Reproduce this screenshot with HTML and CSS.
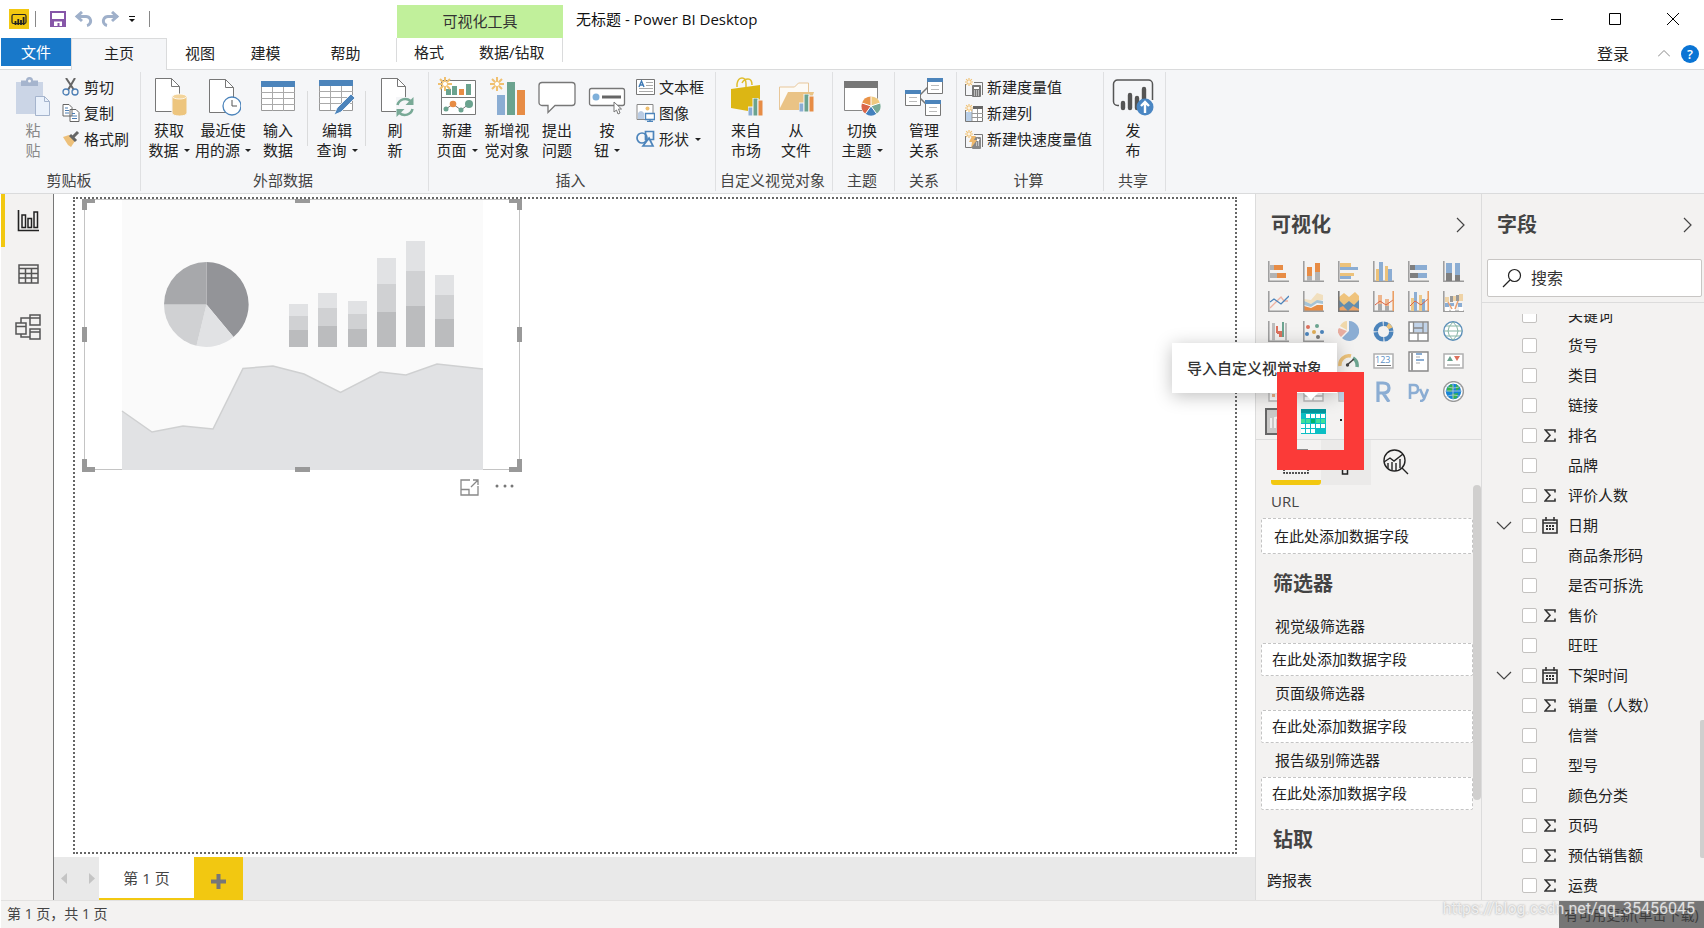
FILE: index.html
```html
<!DOCTYPE html>
<html lang="zh-CN">
<head>
<meta charset="utf-8">
<title>无标题 - Power BI Desktop</title>
<link rel="stylesheet" href="styles.css">
</head>
<body>
<svg class="defs" aria-hidden="true">
  <symbol id="star" viewBox="0 0 14 14"><g stroke="#f0c070" stroke-width="2"><path d="M7 0v4M7 10v4M0 7h4M10 7h4M2 2l3 3M9 9l3 3M12 2l-3 3M5 9l-3 3"/></g><circle cx="7" cy="7" r="2.6" fill="#fff" stroke="#f0c070" stroke-width="1"/></symbol>
  <symbol id="minibars" viewBox="0 0 15 18"><path d="M0 9h5v9H0z" fill="#8badd3" stroke="#f5f6f8"/><path d="M5 0h5v18H5z" fill="#6ba38f" stroke="#f5f6f8"/><path d="M10 2h5v16h-5z" fill="#e78c45" stroke="#f5f6f8"/></symbol>
  <symbol id="axis" viewBox="0 0 21 21"><path d="M.8 0v20.2H21" fill="none" stroke="#9b9b9b" stroke-width="1.5"/></symbol>
  <symbol id="sigma" viewBox="0 0 12 13"><path d="M11 3.5V1H1.2L6 6.3 1 12h10V9.5" fill="none" stroke="#333" stroke-width="1.6"/></symbol>
  <symbol id="calendar" viewBox="0 0 16 17"><path d="M1 3h14v13H1zM1 6h14M4 0v4M12 0v4" fill="none" stroke="#333" stroke-width="1.6"/><path d="M4 8h2v2H4zm3 0h2v2H7zm3 0h2v2h-2zM4 11h2v2H4zm3 0h2v2H7zm3 0h2v2h-2z" fill="#333"/></symbol>
  <symbol id="down" viewBox="0 0 16 9"><path d="M1 1l7 7 7-7" fill="none" stroke="#444" stroke-width="1.2"/></symbol>
  <symbol id="right" viewBox="0 0 9 16"><path d="M1 1l7 7-7 7" fill="none" stroke="#444" stroke-width="1.2"/></symbol>
</svg>

<div class="app">
<header class="top">
  <div class="quick">
    <svg width="20" height="20" viewBox="0 0 20 20"><path fill="#f2c811" d="M0 0h20v20H0z"/><rect x="3" y="5.500" width="14" height="9" rx="1.500" fill="none" stroke="#222" stroke-width="1.200"/><path d="M6.500 12v4M9.300 10v6M12 11v5M14.600 8v8" stroke="#222" stroke-width="1.800"/></svg>
    <span class="bar"></span>
    <button aria-label="保存"><svg width="16" height="16" viewBox="0 0 16 16"><path fill="#8656a8" d="M0 0h16v16H0z"/><path fill="#fff" d="M2 2h12v6H2zM4 10.500h8V15H9.500v-3h-2v3H4z"/></svg></button>
    <button aria-label="撤消"><svg width="19" height="16" viewBox="0 0 19 16"><path d="M2 5.500h9a4.500 4.500 0 0 1 2 9M8 1L3 5.500 8 10" fill="none" stroke="#9fb0ca" stroke-width="3"/></svg></button>
    <button aria-label="恢复"><svg width="19" height="16" viewBox="0 0 19 16"><path d="M17 5.500H8a4.500 4.500 0 0 0-2 9M11 1l5 4.500L11 10" fill="none" stroke="#9fb0ca" stroke-width="3"/></svg></button>
    <button aria-label="自定义"><svg width="8" height="8" viewBox="0 0 8 8"><path d="M1 1.500h6" stroke="#111"/><path d="M1 4h6L4 7z" fill="#111"/></svg></button>
    <span class="bar"></span>
  </div>
  <div class="context">可视化工具</div>
  <h1 class="title">无标题 - Power BI Desktop</h1>
  <div class="winbtns">
    <button aria-label="最小化"><svg width="12" height="12"><path d="M0 6.500h12" stroke="#000"/></svg></button>
    <button aria-label="最大化"><svg width="12" height="12"><path d="M.5.5h11v11H.5z" fill="none" stroke="#000"/></svg></button>
    <button aria-label="关闭"><svg width="12" height="12"><path d="M0 0l12 12M12 0L0 12" stroke="#000"/></svg></button>
  </div>
</header>

<nav class="tabs">
  <button class="file">文件</button>
  <button class="home">主页</button>
  <button class="w-view">视图</button>
  <button class="w-model">建模</button>
  <button class="w-help">帮助</button>
  <div class="ctx-tabs"><button>格式</button><button>数据/钻取</button></div>
  <div class="account">
    <button class="login">登录</button>
    <button aria-label="折叠功能区"><svg width="12" height="7" viewBox="0 0 12 7"><path d="M0 6.500l6-6 6 6" fill="none" stroke="#888"/></svg></button>
    <button class="help" aria-label="帮助">?</button>
  </div>
</nav>

<section class="ribbon">
  <div class="group g-clip">
    <div class="tools">
      <button class="big off"><svg width="36" height="40" viewBox="0 0 36 40"><path d="M1 5h27v32H1z" fill="#cbd5e6"/><path d="M6 3.500h5a3.500 3.500 0 0 1 7 0h5V9H6z" fill="#a5b4cd"/><circle cx="14.500" cy="4" r="1.500" fill="#f5f6f8"/><path d="M20.500 19.500h9l5 5v14h-14z" fill="#eaf1fb" stroke="#a5b4cd"/><path d="M29.500 19.500v5h5" fill="none" stroke="#a5b4cd"/></svg><span>粘</span><span>贴</span></button>
      <div class="small">
        <button><svg width="18" height="18" viewBox="0 0 18 18"><path d="M4 0l8 12M13 0L6 12" stroke="#666" stroke-width="2"/><circle cx="4" cy="14" r="3" fill="none" stroke="#4c7eb4" stroke-width="1.300"/><circle cx="13" cy="14" r="3" fill="none" stroke="#4c7eb4" stroke-width="1.300"/></svg>剪切</button>
        <button><svg width="18" height="18" viewBox="0 0 18 18"><path d="M1 .5h6l3 3V12H1zM8 5.500h6l3 3V17.500H8z" fill="#fff" stroke="#666"/><path d="M3 4h3M3 6.500h4M3 9h4M10 9.500h3M10 12h5M10 14.500h5" stroke="#4c7eb4"/></svg>复制</button>
        <button><svg width="18" height="18" viewBox="0 0 18 18"><path d="M1 7l6-2 6 6-4 6-3-2z" fill="#edc07a"/><path d="M8 5l6 6" stroke="#666" stroke-width="3"/><path d="M11 7l5-5" stroke="#666" stroke-width="3"/></svg>格式刷</button>
      </div>
    </div>
    <h2>剪贴板</h2>
  </div>
  <div class="group g-data">
    <div class="tools">
      <button class="big w54"><svg width="36" height="40" viewBox="0 0 36 40"><path d="M4.500 1.500h16l8 8v25h-24z" fill="#fff" stroke="#777"/><path d="M20.500 1.500v8h8" fill="none" stroke="#777"/><path d="M21 19v17c0 4 15 4 15 0V19z" fill="#edc57e" stroke="#f5f6f8"/><ellipse cx="28.500" cy="19.500" rx="7" ry="2.500" fill="#f3d49b" stroke="#fff" stroke-width=".8"/></svg><span>获取</span><span>数据<i class="dd"></i></span></button>
      <button class="big w54"><svg width="36" height="40" viewBox="0 0 36 40"><path d="M4.500 2.500h16l8 8v25h-24z" fill="#fff" stroke="#777"/><path d="M20.500 2.500v8h8" fill="none" stroke="#777"/><circle cx="27" cy="29" r="9" fill="#fff" stroke="#4c84bb" stroke-width="1.300"/><path d="M27 23v6h5" fill="none" stroke="#555"/></svg><span>最近使</span><span>用的源<i class="dd"></i></span></button>
      <button class="big w56"><svg width="36" height="40" viewBox="0 0 36 40"><path d="M1.500 4.500h33v29h-33z" fill="#fff" stroke="#999"/><path d="M1 4h34v6H1z" fill="#4c84bb"/><path d="M1 15.500h34M1 21.500h34M1 27.500h34M12.500 10v24M23.500 10v24" stroke="#aaa"/></svg><span>输入</span><span>数据</span></button>
      <span class="vsep"></span>
      <button class="big w54"><svg width="38" height="40" viewBox="0 0 38 40"><path d="M1.500 3.500h33v30h-33z" fill="#fff" stroke="#999"/><path d="M1 3h34v6H1z" fill="#4c84bb"/><path d="M1 14.500h34M1 20.500h34M1 26.500h34M12.500 9v24M23.500 9v24" stroke="#aaa"/><path d="M16 38l3-7 14-14 4 4-14 14z" fill="#4c84bb" stroke="#fff" stroke-width=".8"/></svg><span>编辑</span><span>查询<i class="dd"></i></span></button>
      <span class="vsep"></span>
      <button class="big w54"><svg width="38" height="40" viewBox="0 0 38 40"><path d="M5.500 1.500h16l8 8v25h-24z" fill="#fff" stroke="#777"/><path d="M21.500 1.500v8h8" fill="none" stroke="#777"/><path d="M20 20h18v20H20z" fill="#f5f6f8"/><path d="M21.500 28a8 8 0 0 1 13-4M36.500 32a8 8 0 0 1-13 4" fill="none" stroke="#78a996" stroke-width="2.600"/><path d="M37.500 20v8h-8zM20.500 40v-8h8z" fill="#78a996"/></svg><span>刷</span><span>新</span></button>
    </div>
    <h2>外部数据</h2>
  </div>
  <div class="group g-ins">
    <div class="tools">
      <button class="big w50"><svg width="38" height="40" viewBox="0 0 38 40"><path d="M3.500 3.500h34v34h-34zM3 20.500h35" fill="#fff" stroke="#777"/><path d="M8 12h5v6H8zM14 9h5v9h-5zM28 7h5v11h-5z" fill="#6ba38f"/><path d="M21 12h5v6h-5z" fill="#e78c45"/><path d="M8 32l7-5 8 6 8-6" fill="none" stroke="#777"/><g fill="#6ba38f"><circle cx="8" cy="32" r="2.500"/><circle cx="23" cy="33" r="2.500"/><circle cx="31" cy="27" r="4"/></g><circle cx="15" cy="27" r="3.300" fill="#e78c45"/><use href="#star" width="14" height="14"/></svg><span>新建</span><span>页面<i class="dd"></i></span></button>
      <button class="big w50"><svg width="36" height="40" viewBox="0 0 36 40"><path d="M8 18h8v20H8z" fill="#8badd3"/><path d="M18 5h8v33h-8z" fill="#6ba38f"/><path d="M28 13h8v25h-8z" fill="#e78c45"/><use href="#star" x="1" width="14" height="14"/></svg><span>新增视</span><span>觉对象</span></button>
      <button class="big w50"><svg width="38" height="40" viewBox="0 0 38 40"><path d="M4 5.500h30a3 3 0 0 1 3 3v17a3 3 0 0 1-3 3H17l-7 7v-7H4a3 3 0 0 1-3-3v-17a3 3 0 0 1 3-3z" fill="#fff" stroke="#777" stroke-width="1.300"/></svg><span>提出</span><span>问题</span></button>
      <button class="big w50"><svg width="38" height="40" viewBox="0 0 38 40"><rect x="1.500" y="11.500" width="35" height="17" rx="2" fill="#fff" stroke="#777" stroke-width="1.300"/><circle cx="8" cy="20" r="3.500" fill="#7fb0da"/><path d="M14 20h19" stroke="#666" stroke-width="3"/><path d="M26 25v10l2.500-2 1.500 4 2-1-1.500-4h3z" fill="#fff" stroke="#777"/></svg><span>按</span><span>钮<i class="dd"></i></span></button>
      <div class="small">
        <button><svg width="19" height="18" viewBox="0 0 19 18"><path d="M.5 1.500h18v15H.5z" fill="#fff" stroke="#777"/><path d="M3 9l2.500-6L8 9M4 7h3" fill="none" stroke="#3f7ab5" stroke-width="1.400"/><path d="M10 4.500h7M10 7.500h7M3 10.500h14M3 13.500h14" stroke="#aaa"/></svg>文本框</button>
        <button><svg width="19" height="18" viewBox="0 0 19 18"><path d="M1 .5h16v15H1z" fill="#fff" stroke="#888"/><circle cx="11.500" cy="4.500" r="2" fill="#f0c070"/><path d="M2 15V9q3-4 6 0v6z" fill="#b9cbe3"/><path d="M9.500 9.500h9v6h-9zM14 15v3M11 17.500h6" fill="#fff" stroke="#4c84bb" stroke-width="1.400"/></svg>图像</button>
        <button><svg width="19" height="18" viewBox="0 0 19 18"><g fill="none" stroke="#4c84bb" stroke-width="1.700"><path d="M9.500 1.500h8v8h-8zM13 8l4 8H7z"/><circle cx="6" cy="8" r="5"/></g></svg>形状<i class="dd"></i></button>
      </div>
    </div>
    <h2>插入</h2>
  </div>
  <div class="group g-custom">
    <div class="tools">
      <button class="big w50"><svg width="38" height="40" viewBox="0 0 38 40"><path d="M10 10V7q1-6 5-6t4 6v3M15 6q2-4 6-4t4 6" fill="none" stroke="#e0bd2c" stroke-width="1.500"/><path d="M4 12l29-4v26H21L4 31z" fill="#dcb614"/><use href="#minibars" x="21" y="21" width="15" height="18"/></svg><span>来自</span><span>市场</span></button>
      <button class="big w50"><svg width="38" height="40" viewBox="0 0 38 40"><path d="M2.500 32V10h15l4-4h10v26z" fill="#fcfaf6" stroke="#e8c79a"/><path d="M2 33l9-18h26l-6 18z" fill="#eac385"/><use href="#minibars" x="22" y="17" width="15" height="18"/></svg><span>从</span><span>文件</span></button>
    </div>
    <h2>自定义视觉对象</h2>
  </div>
  <div class="group g-theme">
    <div class="tools">
      <button class="big w58"><svg width="38" height="40" viewBox="0 0 38 40"><path d="M1.500 4.500h33v29h-33z" fill="#fff" stroke="#888"/><path d="M1 4h34v7H1z" fill="#777"/><circle cx="28" cy="29" r="10" fill="#fff"/><g><path d="M28 29V19.500a9.500 9.500 0 0 1 9 6.500z" fill="#efc97f"/><path d="M28 29l9-3a9.500 9.500 0 0 1-3.500 10.700z" fill="#78a996"/><path d="M28 29l5.500 7.700a9.500 9.500 0 0 1-11 0z" fill="#4380bd"/><path d="M28 29l-5.500 7.700A9.500 9.500 0 0 1 19 26z" fill="#d96548"/><path d="M28 29l-9-3a9.500 9.500 0 0 1 9-6.500z" fill="#e99348"/></g><path d="M28 29v-9.500M28 29l9-3M28 29l5.500 7.700M28 29l-5.500 7.700M28 29l-9-3" stroke="#fff"/></svg><span>切换</span><span>主题<i class="dd"></i></span></button>
    </div>
    <h2>主题</h2>
  </div>
  <div class="group g-rel">
    <div class="tools">
      <button class="big w58"><svg width="38" height="40" viewBox="0 0 38 40"><path d="M15 18l9-9M15 21l9 9" stroke="#777" stroke-width="1.500"/><g fill="#fff" stroke="#777"><path d="M.5 13.500h15v15H.5zM22.500 1.500h15v15h-15zM20.500 23.500h15v15h-15z"/></g><path d="M0 13h16v4H0zM22 1h16v4H22zM20 23h16v4H20z" fill="#4c84bb"/><path d="M4 20.500h8M4 24.500h8M26 8.500h8M26 12.500h8M24 30.500h8M24 34.500h8" stroke="#bbb"/></svg><span>管理</span><span>关系</span></button>
    </div>
    <h2>关系</h2>
  </div>
  <div class="group g-calc">
    <div class="tools">
      <div class="small">
        <button><svg width="18" height="19" viewBox="0 0 18 19"><path d="M.5 6v11.500H7M9 4.500h8.500V17" fill="none" stroke="#777"/><rect x="7" y="7" width="9" height="12" rx="1" fill="#777"/><path d="M9 9h5v2H9z" fill="#fff"/><path d="M9 13h5M9 15h5M9 17h5" stroke="#fff" stroke-dasharray="1 1"/><use href="#star" width="8" height="8"/></svg>新建度量值</button>
        <button><svg width="18" height="19" viewBox="0 0 18 19"><path d="M.5 6v11.500h17v-15H9" fill="#fff" stroke="#777"/><path d="M8 2h10v3H8z" fill="#666"/><path d="M1 8h6v9H1z" fill="#b9cfe8"/><path d="M7 5v12M12.500 5v12M7 9.500h11M7 13.500h11" stroke="#999"/><use href="#star" width="8" height="8"/></svg>新建列</button>
        <button><svg width="18" height="19" viewBox="0 0 18 19"><path d="M.5 6v11.500H7M9 4.500h8.500V17" fill="none" stroke="#777"/><rect x="7" y="7" width="9" height="12" rx="1" fill="#888"/><path d="M12 9h2v2h-2zM11 13h4M11 15h4" fill="#fff" stroke="#fff" stroke-dasharray="1 1"/><path d="M7 6h4l-2 4h3l-6 8 1-6H4z" fill="#eeb86c"/><use href="#star" width="8" height="8"/></svg>新建快速度量值</button>
      </div>
    </div>
    <h2>计算</h2>
  </div>
  <div class="group g-share">
    <div class="tools">
      <button class="big w58"><svg width="42" height="40" viewBox="0 0 42 40"><path d="M7 28.500H5.500a4 4 0 0 1-4-4V7a4 4 0 0 1 4-4h31a4 4 0 0 1 4 4v16" fill="none" stroke="#555" stroke-width="1.500"/><path d="M11 26v5M18 18v13M25 21v10M32 12v18" stroke="#555" stroke-width="4.400" stroke-linecap="round"/><circle cx="33" cy="30" r="8.500" fill="#4a86c3"/><path d="M33 36V26M29 29l4-4 4 4" fill="none" stroke="#fff" stroke-width="2.400"/></svg><span>发</span><span>布</span></button>
    </div>
    <h2>共享</h2>
  </div>
</section>

<main class="work">
  <nav class="rail">
    <button class="on" aria-label="报表"><svg width="23" height="22" viewBox="0 0 23 22"><path d="M1.500 0v20.500H22" fill="none" stroke="#222" stroke-width="1.600"/><path d="M5 5h3.500v12.500H5zM11 8.500h3.500v9H11zM17 2h3.500v15.500H17z" fill="none" stroke="#222" stroke-width="1.500"/></svg></button>
    <button aria-label="数据"><svg width="21" height="20" viewBox="0 0 21 20"><path d="M1 1h19v18H1zM1 4.500h19M1 9.500h19M1 14h19M7.500 5v14M13.500 5v14" fill="none" stroke="#555" stroke-width="1.500"/></svg></button>
    <button aria-label="模型"><svg width="26" height="26" viewBox="0 0 26 26"><path d="M1 9h10v11H1zM15 1h10v10H15zM15 15h10v10H15zM1 12.500h10M15 4h10M15 18h10M6 9V4h9M6 20v3h9" fill="none" stroke="#555" stroke-width="1.500"/></svg></button>
  </nav>

  <section class="report">
    <div class="canvas">
      <figure class="visual">
        <svg width="440" height="274" viewBox="82 198 440 274">
          <path d="M84.500 199.500h435v270h-435z" fill="#fff" stroke="#c4c4c4"/>
          <path d="M122 200h361v269H122z" fill="#fafafa"/>
          <path d="M206.500 304.500V262a42.500 42.500 0 0 1 27 75z" fill="#939498"/>
          <path d="M206.500 304.500l27 32.500a42.500 42.500 0 0 1-37 8.800z" fill="#e1e2e4"/>
          <path d="M206.500 304.500l-10 41.300a42.500 42.500 0 0 1-32.500-41.300z" fill="#d0d1d3"/>
          <path d="M206.500 304.500H164a42.500 42.500 0 0 1 42.500-42.500z" fill="#a7a8ab"/>
          <g fill="#e1e2e4"><path d="M289 304h19v12h-19zM318 293h19v15h-19zM348 301h19v13h-19zM377 258h19v26h-19zM406 241h19v30h-19zM435 275h19v20h-19z"/></g>
          <g fill="#d0d1d3"><path d="M289 316h19v14h-19zM318 308h19v18h-19zM348 314h19v15h-19zM377 284h19v28h-19zM406 271h19v35h-19zM435 295h19v24h-19z"/></g>
          <g fill="#bbbcbe"><path d="M289 330h19v17h-19zM318 326h19v21h-19zM348 329h19v18h-19zM377 312h19v35h-19zM406 306h19v41h-19zM435 319h19v28h-19z"/></g>
          <path d="M122 411l30 21 31-6 30 3 30-60.500 30-2.500 31 8 36.500 18.500 39.500-20.500 26 3 31-11 46 5v101H122z" fill="#e1e2e4"/>
          <path d="M122 411l30 21 31-6 30 3 30-60.500 30-2.500 31 8 36.500 18.500 39.500-20.500 26 3 31-11 46 5" fill="none" stroke="#cfd0d1" stroke-width="1.500"/>
          <g fill="#999"><path d="M82 199h13v4h-8v7h-5zM522 199h-13v4h8v7h5zM82 472h13v-5h-8v-8h-5zM522 472h-13v-5h8v-8h5zM295 199h15v4h-15zM295 467h15v5h-15zM82 327h5v15h-5zM517 327h5v15h-5z"/></g>
        </svg>
        <figcaption>
          <button aria-label="焦点模式"><svg width="19" height="17" viewBox="0 0 19 17"><path d="M10 1H1v15h17V7M1 10.500h8V16M11 8l7-7M13 1h5v5" fill="none" stroke="#888" stroke-width="1.300"/></svg></button>
          <button aria-label="更多选项"><svg width="19" height="17" viewBox="0 0 19 17"><g fill="#777"><circle cx="2" cy="7" r="1.500"/><circle cx="10" cy="7" r="1.500"/><circle cx="17" cy="7" r="1.500"/></g></svg></button>
        </figcaption>
      </figure>
    </div>
    <div class="pages">
      <button class="arrow" aria-label="上一页"><svg width="6" height="11"><path d="M6 0v11L0 5.500z" fill="#c4c4c4"/></svg></button>
      <button class="arrow" aria-label="下一页"><svg width="6" height="11"><path d="M0 0v11l6-5.500z" fill="#c4c4c4"/></svg></button>
      <button class="page">第 1 页</button>
      <button class="add" aria-label="新建页"><svg width="15" height="15"><path d="M7.500 0v15M0 7.500h15" stroke="#777" stroke-width="4"/></svg></button>
    </div>
  </section>

  <aside class="vis">
    <div class="head"><h2>可视化</h2><button aria-label="折叠"><svg width="9" height="16"><use href="#right"/></svg></button></div>
    <div class="gallery">
      <svg viewBox="0 0 21 21"><use href="#axis"/><path d="M2 4h4v5H2zM2 12h7v5H2z" fill="#b3b3b3"/><path d="M6 4h9v5H6zM9 12h9v5H9z" fill="#e78c45"/></svg>
      <svg viewBox="0 0 21 21"><use href="#axis"/><path d="M4 15h5v5H4zM12 11h5v9h-5z" fill="#b3b3b3"/><path d="M4 6h5v9H4zM12 2h5v9h-5z" fill="#e78c45"/></svg>
      <svg viewBox="0 0 21 21"><use href="#axis"/><path d="M2 2h11v4H2zM2 12h14v3H2z" fill="#ecc27a"/><path d="M2 6h18v3H2zM2 15h11v3H2z" fill="#8badd3"/></svg>
      <svg viewBox="0 0 21 21"><use href="#axis"/><path d="M3 8h3v12H3zM12 5h3v15h-3z" fill="#ecc27a"/><path d="M6 1h4v19H6zM15 8h4v12h-4z" fill="#8badd3"/></svg>
      <svg viewBox="0 0 21 21"><use href="#axis"/><path d="M2 4h5v5H2zM2 12h8v5H2z" fill="#7f7f7f"/><path d="M7 4h12v5H7zM10 12h9v5h-9z" fill="#8badd3"/></svg>
      <svg viewBox="0 0 21 21"><use href="#axis"/><path d="M3 12h6v8H3zM12 14h5v6h-5z" fill="#7f7f7f"/><path d="M3 2h6v10H3zM12 2h5v12h-5z" fill="#8badd3"/></svg>

      <svg viewBox="0 0 21 21"><use href="#axis"/><path d="M2 17L13 6l3 4h4" fill="none" stroke="#eeb2a2" stroke-width="1.300"/><path d="M2 11l4-3 7 5 8-8" fill="none" stroke="#4c84bb" stroke-width="1.300"/></svg>
      <svg viewBox="0 0 21 21"><path d="M1 8l7 1 6-7 6 2v5l-7 1-5 3-7-3z" fill="#f1dfbe"/><path d="M1 10l7 3 6-4 6 1v3l-6-1-6 4-7-2z" fill="#a5c3d5"/><path d="M1 15l7 2 6-3h6v6H1z" fill="#e78c45"/><use href="#axis"/></svg>
      <svg viewBox="0 0 21 21"><path d="M1 6l5-4 5 4 6-5 4 4v15H1z" fill="#efc37c"/><path d="M1 9l5 5 5-4 5 4 5-5v11H1z" fill="#638dae"/><path d="M1 17l4-2 5 5 5-5 6 3v3H1z" fill="#efa466"/><path d="M.8 0v20.200H21" fill="none" stroke="#777" stroke-width="1.600"/></svg>
      <svg viewBox="0 0 21 21"><use href="#axis"/><path d="M5 4h4v9H5zM12 8h4v7h-4z" fill="#eeb58c"/><path d="M5 13h4v7H5zM12 15h4v5h-4z" fill="#aaa"/><path d="M2 14l5-4 6 4 7-5" fill="none" stroke="#d96548"/><path d="M20.200 0v20" stroke="#e99a5c" stroke-width="1.500"/></svg>
      <svg viewBox="0 0 21 21"><use href="#axis"/><path d="M3 7h3v13H3zM11 4h3v16h-3z" fill="#ecc88a"/><path d="M6 1h3v19H6zM14 8h3v12h-3z" fill="#8badd3"/><path d="M2 15l5-5 6 4 7-6" fill="none" stroke="#d96548"/><path d="M20.200 0v20" stroke="#e99a5c" stroke-width="1.500"/></svg>
      <svg viewBox="0 0 21 21"><use href="#axis"/><path d="M2 6h4v5H2zM10 5h4v5h-4zM16 3h4v7h-4z" fill="#efd3a6"/><path d="M7 5h3v6H7zM13 4h3v6h-3z" fill="#999"/><path d="M2 12h4v4H2zM7 12h4v3H7zM15 12h4v4h-4z" fill="#8badd3"/><path d="M8 16h4v4H8zM16 16h4v4h-4zM2 16h4v4H2z" fill="#fff"/><path d="M5 11l4 7M15 10l-3 8" stroke="#e9a071" stroke-width="1.500"/></svg>

      <svg viewBox="0 0 21 21"><use href="#axis"/><path d="M4 2h3v18H4zM17 2h2v18h-2z" fill="#bdbdbd"/><path d="M8 5h2v7H8zM9 10h5v3H9zM11 12h3v4h-3z" fill="#dc715d"/><path d="M14 1h2v15h-2z" fill="#6ba38f"/></svg>
      <svg viewBox="0 0 21 21"><use href="#axis"/><g fill="#4c84bb"><circle cx="4" cy="13" r="2"/><circle cx="19" cy="11" r="2"/></g><circle cx="5" cy="6" r="2" fill="#dc715d"/><circle cx="14" cy="5" r="2" fill="#6ba38f"/><circle cx="11" cy="11" r="2" fill="#dfad57"/><circle cx="15" cy="16" r="2" fill="#777"/></svg>
      <svg viewBox="0 0 21 21"><path d="M11 10V0a10 10 0 1 1-7 17z" fill="#8badd3"/><path d="M9 9L2 5q3-5 7-5z" fill="#f0d8ab"/><path d="M9 10l-6 6q-5-5-2-9z" fill="#e8ada0"/></svg>
      <svg viewBox="0 0 21 21"><circle cx="10.500" cy="10.500" r="7.800" fill="none" stroke="#4c84bb" stroke-width="4.500" stroke-dasharray="11.250 1"/><path d="M14.500 3.800a8 8 0 0 1 3 3.500" fill="none" stroke="#ecc27a" stroke-width="4.500"/></svg>
      <svg viewBox="0 0 21 21"><path d="M1 1h19v19H1z" fill="#fff" stroke="#888" stroke-width="1.500"/><path d="M6 2h13v9H6z" fill="#c1d3e9"/><path d="M1 12h19M5.500 1v11M15 1v11M5 7h10M10 12v8" stroke="#888" stroke-width="1.300"/></svg>
      <svg viewBox="0 0 21 21"><circle cx="10" cy="10" r="9.200" fill="#fff" stroke="#5d90b9" stroke-width="1.400"/><path d="M1 10h18M3 5h14M3 15h14M10 1Q0 10 10 19M10 1q10 9 0 18" fill="none" stroke="#84b3a3"/></svg>

      <svg viewBox="0 0 21 21"><path d="M1 3l9 3 10-3v14l-10 3-9-3z" fill="#ddd"/></svg>
      <svg viewBox="0 0 21 21"><path d="M1 3l9 3 10-3v14l-10 3-9-3z" fill="#ddd"/></svg>
      <svg viewBox="0 0 21 21"><path d="M2 15A9 9 0 0 1 13 5" fill="none" stroke="#ecc27a" stroke-width="3.500"/><path d="M15 7q5 3 4 9" fill="none" stroke="#6ba38f" stroke-width="3.500"/><path d="M9 14l7-6" stroke="#444" stroke-width="1.600"/><circle cx="9.500" cy="14" r="1.700" fill="#444"/></svg>
      <svg viewBox="0 0 21 21"><path d="M1 3h19v14H1z" fill="#fff" stroke="#b0b0b0" stroke-width="1.500"/><text x="2" y="11.500" font-size="9" fill="#5d90c5">123</text><path d="M4 14.500h14" stroke="#777"/></svg>
      <svg viewBox="0 0 21 21"><path d="M1 1h19v19H1z" fill="#fff" stroke="#888" stroke-width="1.400"/><path d="M3 2h2v18H3z" fill="#999"/><path d="M8 3h6M8 9h8" stroke="#8badd3" stroke-width="2"/><path d="M8 6h4M8 12h4" stroke="#aaa"/></svg>
      <svg viewBox="0 0 21 21"><path d="M1 3h19v14H1z" fill="#fff" stroke="#b0b0b0" stroke-width="1.500"/><path d="M4 10l3-5 3 5z" fill="#6ba38f"/><path d="M11 5h6l-3 5z" fill="#dc715d"/><path d="M4 14h13" stroke="#888"/></svg>

      <svg viewBox="0 0 21 21"><path d="M1 1h19v19H1z" fill="#fff" stroke="#bbb" stroke-width="1.400"/><path d="M4 5h3v3H4zM4 13h3v3H4z" fill="#eeb28a"/></svg>
      <svg viewBox="0 0 21 21"><path d="M1 1h19v19H1zM1 11h19M1 15h19M10 1v19" fill="#fff" stroke="#bbb" stroke-width="1.400"/></svg>
      <svg viewBox="0 0 21 21"><path d="M1 1h19v19H1z" fill="#fff" stroke="#bbb" stroke-width="1.400"/><path d="M1 9h7v10H1z" fill="#c1d3e9"/></svg>
      <svg viewBox="0 0 21 21"><path d="M5 21V2h5q6 0 6 5t-6 5H6M10 12l6 9" fill="none" stroke="#8badd3" stroke-width="3.200"/></svg>
      <svg viewBox="0 0 21 21"><path d="M2 18V4h4q4 0 4 4t-4 4H3M12 8l4 9M20 8l-4 10q-1 2-4 2" fill="none" stroke="#8badd3" stroke-width="2.600"/></svg>
      <svg viewBox="0 0 21 21"><circle cx="10.500" cy="10.500" r="9.900" fill="#fff" stroke="#999" stroke-width="1.400"/><circle cx="10.500" cy="10.500" r="7.700" fill="#1684d6"/><path d="M4 7l4-4 3 3-3 5-4-1zM13 3l4 4-4 3zM9 13l6-1-1 5-4 1z" fill="#35b24c"/><path d="M1 10h19M10 1v19M3 5q7 4 15 0M3 16q7-4 15 0" fill="none" stroke="#bcd" stroke-width=".8"/></svg>

      <svg viewBox="0 0 21 21" class="spill"><path d="M-2-2h25v25H-2z" fill="#c9c8c7" stroke="#666" stroke-width="2"/><path d="M3 7v10M7 17V7q7-2 7 4v6" fill="none" stroke="#eee" stroke-width="2"/></svg>
      <svg viewBox="0 0 21 21" class="spill"><path d="M-2-2h25v25H-2z" fill="#0cbfc4"/><path d="M-2-2h25v4H-2z" fill="#07969c"/><path d="M3 3h4v4H3zM8 3h4v4H8zM13 3h4v4h-4zM18 3h4v4h-4zM-2 13h4v4h-4zM3 13h4v4H3zM8 13h4v4H8zM13 13h4v4h-4zM18 13h4v4h-4zM-2 18h4v4h-4zM3 18h4v4H3zM8 18h4v4H8z" fill="#fff"/><path d="M-2 8h4v4h-4zM3 8h4v4H3zM13 8h4v4h-4zM18 8h4v4h-4z" fill="#3fe09a"/><path d="M8 8h4v4H8z" fill="#05b56b"/></svg>
      <svg viewBox="0 0 21 21" class="spill"><path d="M2 8h2v2H2zM9 8h2v2H9zM15 8h2v2h-2z" fill="#222"/></svg>
    </div>
    <div class="modes">
      <button class="on" aria-label="字段"><svg width="26" height="26" viewBox="0 0 26 26"><path d="M1 1h24v6H1zM1 10h24v6H1z" fill="none" stroke="#222"/><path d="M1 20v4h24v-4" fill="none" stroke="#222" stroke-width="1.500" stroke-dasharray="2 1"/></svg></button>
      <button class="fmt" aria-label="格式"><svg width="20" height="26" viewBox="0 0 20 26"><path d="M1 2h16v7H1zM17 5h2v7H9v5M6.500 17h5v8h-5z" fill="none" stroke="#222" stroke-width="1.500"/></svg></button>
      <button aria-label="分析"><svg width="26" height="26" viewBox="0 0 26 26"><g fill="none" stroke="#222" stroke-width="1.400"><circle cx="11.500" cy="11.500" r="10.500"/><path d="M1 13l6-4 4 3 9-7M5 14v5M9 13v8M13 14v8M17 10v9M19 19l6 6"/></g></svg></button>
    </div>
    <div class="wells">
      <div class="wellbody">
        <h4 class="url">URL</h4>
        <div class="drop tall">在此处添加数据字段</div>
        <h3>筛选器</h3>
        <h4>视觉级筛选器</h4>
        <div class="drop">在此处添加数据字段</div>
        <h4>页面级筛选器</h4>
        <div class="drop">在此处添加数据字段</div>
        <h4>报告级别筛选器</h4>
        <div class="drop">在此处添加数据字段</div>
        <h3>钻取</h3>
        <h4 class="cross">跨报表</h4>
      </div>
      <div class="track"><div class="thumb"></div></div>
    </div>
    <div class="tip" role="tooltip">导入自定义视觉对象</div>
    <div class="mark"></div>
  </aside>

  <aside class="fields">
    <div class="head"><h2>字段</h2><button aria-label="折叠"><svg width="9" height="16"><use href="#right"/></svg></button></div>
    <label class="search"><svg width="20" height="20" viewBox="0 0 20 20"><circle cx="12.500" cy="7.500" r="6" fill="none" stroke="#222" stroke-width="1.200"/><path d="M8 12l-7 7" stroke="#222" stroke-width="1.200"/></svg><input type="text" placeholder="搜索" aria-label="搜索"></label>
    <div class="list">
      <label class="row"><i></i><input type="checkbox"><i></i>关键词</label>
      <label class="row"><i></i><input type="checkbox"><i></i>货号</label>
      <label class="row"><i></i><input type="checkbox"><i></i>类目</label>
      <label class="row"><i></i><input type="checkbox"><i></i>链接</label>
      <label class="row"><i></i><input type="checkbox"><svg class="sg"><use href="#sigma"/></svg>排名</label>
      <label class="row"><i></i><input type="checkbox"><i></i>品牌</label>
      <label class="row"><i></i><input type="checkbox"><svg class="sg"><use href="#sigma"/></svg>评价人数</label>
      <label class="row"><svg class="ch"><use href="#down"/></svg><input type="checkbox"><svg class="cal"><use href="#calendar"/></svg>日期</label>
      <label class="row"><i></i><input type="checkbox"><i></i>商品条形码</label>
      <label class="row"><i></i><input type="checkbox"><i></i>是否可拆洗</label>
      <label class="row"><i></i><input type="checkbox"><svg class="sg"><use href="#sigma"/></svg>售价</label>
      <label class="row"><i></i><input type="checkbox"><i></i>旺旺</label>
      <label class="row"><svg class="ch"><use href="#down"/></svg><input type="checkbox"><svg class="cal"><use href="#calendar"/></svg>下架时间</label>
      <label class="row"><i></i><input type="checkbox"><svg class="sg"><use href="#sigma"/></svg>销量（人数）</label>
      <label class="row"><i></i><input type="checkbox"><i></i>信誉</label>
      <label class="row"><i></i><input type="checkbox"><i></i>型号</label>
      <label class="row"><i></i><input type="checkbox"><i></i>颜色分类</label>
      <label class="row"><i></i><input type="checkbox"><svg class="sg"><use href="#sigma"/></svg>页码</label>
      <label class="row"><i></i><input type="checkbox"><svg class="sg"><use href="#sigma"/></svg>预估销售额</label>
      <label class="row"><i></i><input type="checkbox"><svg class="sg"><use href="#sigma"/></svg>运费</label>
      <div class="thumb"></div>
    </div>
  </aside>
</main>

<footer class="status">
  <span>第 1 页，共 1 页</span>
  <button class="update">有可用更新(单击下载)</button>
  <span class="watermark">https://blog.csdn.net/qq_35456045</span>
</footer>
</div>
</body>
</html>
```
FILE: styles.css
```css
* { box-sizing: border-box; }
body { margin: 0; font: 15px/20px "Open Sans", "Noto Sans CJK SC", sans-serif; color: #222; background: #fff; }
button { font: inherit; color: inherit; background: none; border: 0; padding: 0; margin: 0; }
h1, h2, h3, h4, figure { margin: 0; font-weight: 400; font-size: 15px; }
svg { display: block; flex: none; }
.defs { position: absolute; width: 0; height: 0; }
.app { display: flex; flex-direction: column; height: 100vh; padding-left: 1px; overflow: hidden; }

.top { display: flex; height: 38px; flex: none; }
.quick { display: flex; align-items: center; width: 396px; padding-left: 8px; }
.quick .bar { width: 1px; height: 16px; background: #888; margin-left: 6px; }
.quick button { margin-left: 7px; }
.quick .bar + button { margin-left: 14px; }
.quick button + button { margin-left: 8px; }
.quick button + .bar { margin-left: 13px; }
.context { width: 166px; height: 33px; margin-top: 5px; background: #c1f09b; text-align: center; line-height: 33px; color: #333; }
.title { padding-left: 13px; line-height: 38px; color: #111; }
.winbtns { display: flex; align-items: center; gap: 46px; margin-left: auto; padding-right: 25px; }

.tabs { display: flex; height: 31px; flex: none; line-height: 28px; position: relative; z-index: 1; }
.tabs > button { display: block; padding-bottom: 2px; }
.tabs > .file { width: 70px; height: 28px; background: #1979ca; color: #fff; padding: 0; }
.tabs > .home { width: 96px; height: 32px; background: #f5f6f8; border: 1px solid #dadbdc; border-bottom: 0; padding-bottom: 4px; }
.w-view { width: 66px; }
.w-model { width: 65px; }
.w-help { width: 95px; }
.ctx-tabs { display: flex; gap: 35px; width: 167px; height: 24px; padding-left: 17px; border: 1px solid #dadbdc; border-top: 0; border-bottom: 0; margin-left: 3px; }
.account { display: flex; align-items: center; margin-left: auto; padding-right: 5px; }
.login { font-size: 16px; margin-right: 29px; }
.help { width: 18px; height: 18px; margin-left: 11px; border-radius: 50%; background: #0a74d4; color: #fff; font-weight: 600; font-size: 13px; line-height: 18px; }

.ribbon { display: flex; flex: none; height: 125px; background: #f5f6f8; border: 1px solid #dadbdc; border-width: 1px 0; margin-left: -1px; padding: 2px 0 2px 1px; }
.group { display: flex; flex-direction: column; justify-content: space-between; border-right: 1px solid #dfe0e2; }
.group h2 { text-align: center; color: #444; line-height: 20px; white-space: nowrap; padding: 0 3px 1px 0; }
.tools { display: flex; }
.big { display: flex; flex-direction: column; align-items: center; padding-top: 5px; line-height: 20px; white-space: nowrap; }
.big svg { margin-bottom: 3px; }
.off { color: #888; width: 58px; }
.w50 { width: 50px; }
.w54 { width: 54px; }
.w56 { width: 56px; }
.w58 { width: 58px; }
.dd { display: inline-block; border: 3px solid transparent; border-top-color: #222; border-bottom: 0; margin-left: 5px; vertical-align: 4px; }
.vsep { width: 1px; height: 55px; margin: 19px 2px 0 1px; background: #dadbdc; }
.small { display: flex; flex-direction: column; padding-top: 2px; }
.small button { display: flex; align-items: center; gap: 4px; height: 26px; white-space: nowrap; }
.small .dd { margin-left: 2px; }
.g-clip { width: 140px; }
.g-clip .tools { padding-left: 3px; }
.g-data { width: 288px; }
.g-data .tools { padding-left: 1px; }
.g-ins { width: 287px; }
.g-ins .tools { padding-left: 3px; }
.g-ins .small { padding-left: 4px; }
.g-custom { width: 117px; }
.g-custom .tools { padding-left: 5px; }
.g-theme, .g-rel, .g-share { width: 62px; }
.g-calc { width: 147px; }
.g-calc .tools { padding-left: 8px; }

.work { display: grid; grid-template-columns: 53px minmax(0, 1fr) 226px 223px; flex: 1; min-height: 0; }
.rail { background: #f3f2f1; border-right: 1px solid #777; display: flex; flex-direction: column; }
.rail button { height: 53px; display: flex; align-items: center; justify-content: center; border-left: 4px solid transparent; padding-right: 2px; }
.rail .on { border-left-color: #f2c811; }

.report { display: flex; flex-direction: column; min-width: 0; }
.canvas { flex: 1; margin: 3px 18px 3px 19px; border: 2px dotted #666; position: relative; }
.visual { position: absolute; left: 7px; top: -1px; }
.visual figcaption { display: flex; justify-content: flex-end; gap: 16px; padding: 7px 8px 0 0; }
.pages { display: flex; height: 43px; flex: none; background: #e9e9e9; }
.arrow { width: 20px; display: flex; align-items: center; justify-content: center; }
.arrow + .arrow { width: 25px; justify-content: flex-end; padding-right: 4px; }
.page { width: 95px; background: #fff; border-bottom: 2px solid #f2c811; color: #444; }
.add { width: 49px; background: #f2c811; display: flex; align-items: center; justify-content: center; padding-top: 6px; }

.vis, .fields { background: #f3f2f1; border-left: 1px solid #dcdcdc; display: flex; flex-direction: column; min-height: 0; position: relative; }
.head { display: flex; justify-content: space-between; align-items: center; height: 62px; flex: none; padding: 0 16px 0 15px; }
.head h2 { font-size: 20px; font-weight: 700; color: #444; }
.gallery { display: grid; grid-template-columns: repeat(6, 21px); grid-auto-rows: 21px; gap: 9px 14px; padding: 5px 0 7px 12px; border-bottom: 1px solid #dcdcdc; }
.gallery svg { width: 21px; height: 21px; }
.gallery .spill { overflow: visible; }
.modes { display: flex; height: 45px; flex: none; padding-left: 15px; }
.modes button { width: 50px; display: flex; justify-content: center; padding-top: 9px; }
.modes .on { border-bottom: 5px solid #f2c811; border-radius: 3px; }
.modes .fmt { background: #ebeae9; }
.wells { display: flex; flex: 1; min-height: 0; overflow: hidden; }
.wellbody { flex: 1; padding: 0 0 0 5px; }
.wellbody h3 { font-size: 20px; font-weight: 700; color: #444; padding: 20px 0 15px 12px; line-height: 20px; }
.wellbody h4 { padding-left: 14px; line-height: 34px; }
.wellbody .url { padding-left: 10px; color: #444; line-height: 33px; }
.wellbody .cross { padding-left: 6px; line-height: 30px; }
.drop { height: 33px; border: 1px dashed #c4c4c4; border-radius: 2px; background: #fff; padding-left: 10px; line-height: 30px; }
.drop.tall { height: 36px; padding-left: 12px; line-height: 34px; }
.track { width: 8px; }
.track .thumb { height: 315px; border-radius: 4px; background: #d0cfce; }
.tip { position: absolute; left: -84px; top: 149px; width: 165px; height: 50px; background: #fff; box-shadow: 0 3px 18px rgba(0, 0, 0, .25); line-height: 50px; text-align: center; font-weight: 500; color: #333; z-index: 2; }
.tip::after { content: ""; position: absolute; left: 132px; top: 50px; border: 7px solid transparent; border-top-color: #fff; border-bottom: 0; }
.mark { position: absolute; left: 21px; top: 178px; width: 87px; height: 98px; border: 20px solid #fb3a38; z-index: 3; }

.search { display: flex; align-items: center; gap: 9px; height: 38px; flex: none; margin: 3px 2px 5px 5px; padding-left: 14px; background: #fff; border: 1px solid #c8c6c4; border-radius: 2px; }
.search input { border: 0; background: none; outline: 0; font: inherit; font-size: 16px; width: 100%; min-width: 0; padding: 0; }
.search input::placeholder { color: #333; opacity: 1; }
.fields .head { padding-right: 12px; }
.fields::before { content: ""; order: 1; height: 1px; flex: none; background: #dcdcdc; }
.list { order: 2; position: relative; flex: 1; min-height: 0; margin-top: 11px; display: flex; flex-direction: column; justify-content: flex-end; overflow: hidden; }
.row { display: grid; grid-template-columns: 26px 22px 24px 1fr; align-items: center; height: 30px; flex: none; padding-left: 14px; white-space: nowrap; }
.row input { appearance: none; width: 15px; height: 15px; margin: 0; background: #fff; border: 1px solid #c4c2c0; border-radius: 2px; }
.sg { width: 12px; height: 13px; }
.cal { width: 16px; height: 17px; margin-left: -2px; }
.ch { width: 16px; height: 9px; }
.list .thumb { position: absolute; right: 0; top: 406px; width: 4px; height: 138px; border-radius: 2px 0 0 2px; background: #d0cfce; }

.status { position: relative; display: flex; align-items: center; justify-content: space-between; height: 28px; flex: none; background: #f3f2f1; border-top: 1px solid #e2e1e0; padding-left: 6px; font-size: 14px; color: #444; }
.status > span:first-child { padding-bottom: 1px; }
.update { align-self: stretch; width: 145px; background: #767676; color: #3c3c3c; white-space: nowrap; }
.watermark { position: absolute; right: 9px; top: -2px; font: 16px/20px Roboto, sans-serif; color: rgba(255, 255, 255, .75); text-shadow: 0 0 2px #999; }
```
